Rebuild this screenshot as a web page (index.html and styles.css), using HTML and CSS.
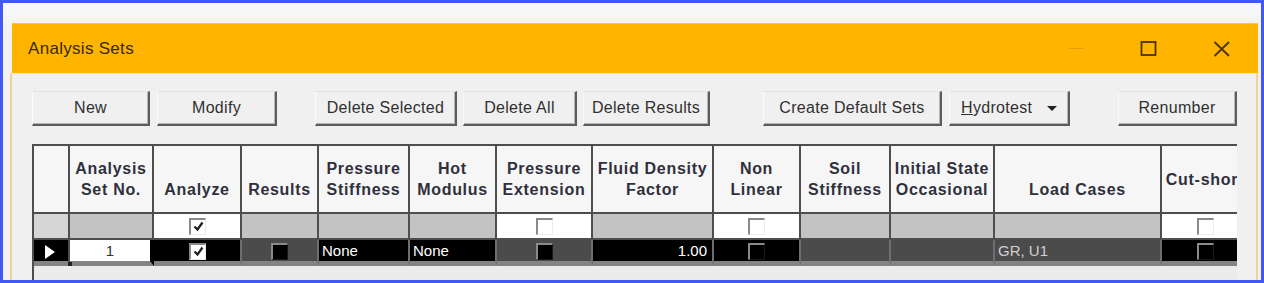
FILE: index.html
```html
<!DOCTYPE html>
<html lang="en">
<head>
    <meta charset="UTF-8">
    <meta name="viewport" content="width=device-width, initial-scale=1.0">
    <title>Analysis Sets</title>
    <link rel="stylesheet" href="styles.css">
</head>
<body>
    <div class="frame">
        <div class="window">
            <!-- Title bar -->
            <div class="titlebar">
                <span class="title">Analysis Sets</span>
                <div class="controls">
                    <span class="ctl"><span class="min-line"></span></span>
                    <span class="ctl">
                        <svg width="18" height="16" viewBox="0 0 18 16"><rect x="1.5" y="1" width="14" height="13" fill="none" stroke="#4a3405" stroke-width="1.8"/></svg>
                    </span>
                    <span class="ctl">
                        <svg width="18" height="16" viewBox="0 0 18 16"><path d="M1.5 1 L16 15 M16 1 L1.5 15" stroke="#4a3405" stroke-width="1.8" fill="none"/></svg>
                    </span>
                </div>
            </div>
            <!-- Body -->
            <div class="winbody">
                <div class="toolbar">
                    <div class="btn-group">
                        <button class="btn w-new">New</button>
                        <button class="btn w-modify">Modify</button>
                    </div>
                    <div class="btn-group g-delete">
                        <button class="btn w-delsel">Delete Selected</button>
                        <button class="btn w-delall">Delete All</button>
                        <button class="btn w-delres">Delete Results</button>
                    </div>
                    <div class="btn-group g-create">
                        <button class="btn w-create">Create Default Sets</button>
                        <button class="btn w-hydro"><u>H</u>ydrotest <span class="caret"></span></button>
                    </div>
                    <div class="btn-group g-renum">
                        <button class="btn w-renum">Renumber</button>
                    </div>
                </div>

                <div class="grid">
                    <table>
                        <colgroup>
                            <col style="width:36px"><col style="width:84px"><col style="width:88px"><col style="width:77px">
                            <col style="width:91px"><col style="width:87px"><col style="width:96px"><col style="width:121px">
                            <col style="width:87px"><col style="width:90px"><col style="width:104px"><col style="width:167px">
                            <col style="width:88px">
                        </colgroup>
                        <tr class="head">
                            <th></th>
                            <th>Analysis<br>Set No.</th>
                            <th class="low">Analyze</th>
                            <th class="low">Results</th>
                            <th>Pressure<br>Stiffness</th>
                            <th>Hot<br>Modulus</th>
                            <th>Pressure<br>Extension</th>
                            <th>Fluid Density<br>Factor</th>
                            <th>Non<br>Linear</th>
                            <th>Soil<br>Stiffness</th>
                            <th>Initial State<br>Occasional</th>
                            <th class="low">Load Cases</th>
                            <th>Cut-short</th>
                        </tr>
                        <tr class="filter">
                            <td class="rh"></td>
                            <td></td>
                            <td class="on"><span class="cb"><svg width="13" height="13" viewBox="0 0 13 13"><path d="M2.5 6.5 L5.5 9.5 L10.5 2.5" stroke="#1e1e1e" stroke-width="2.2" fill="none"/></svg></span></td>
                            <td></td>
                            <td></td>
                            <td></td>
                            <td class="on"><span class="cb"></span></td>
                            <td></td>
                            <td class="on"><span class="cb"></span></td>
                            <td></td>
                            <td></td>
                            <td></td>
                            <td class="on"><span class="cb"></span></td>
                        </tr>
                        <tr class="data">
                            <td class="rh"><span class="arrow"></span><span class="grip"></span></td>
                            <td class="num">1</td>
                            <td class="blk"><span class="cb"><svg width="13" height="13" viewBox="0 0 13 13"><path d="M2.5 6.5 L5.5 9.5 L10.5 2.5" stroke="#1e1e1e" stroke-width="2.2" fill="none"/></svg></span></td>
                            <td class="ro"><span class="cb dark"></span></td>
                            <td class="blk txt">None</td>
                            <td class="blk txt">None</td>
                            <td class="ro"><span class="cb dark"></span></td>
                            <td class="blk val">1.00</td>
                            <td class="blk"><span class="cb dark"></span></td>
                            <td class="ro"></td>
                            <td class="ro"></td>
                            <td class="ro txt">GR, U1</td>
                            <td class="blk"><span class="cb dark"></span></td>
                        </tr>
                    </table>
                </div>
            </div>
        </div>
    </div>
</body>
</html>
```

FILE: styles.css
```css
html, body { margin: 0; padding: 0; }
body { width: 1264px; height: 283px; box-sizing: border-box; padding: 3px; background: #4258f2; overflow: hidden; font-family: "Liberation Sans", Arial, sans-serif; }
.frame { height: 277px; box-sizing: border-box; padding: 20px 3px 0 7px; background: linear-gradient(#f8f8f8, #f1f1f1 30px); overflow: hidden; }
.window { width: 1248px; display: flex; flex-direction: column; }

/* title bar */
.titlebar { flex-shrink: 0; height: 50px; margin-left: 2px; background: #ffb400; border-top: 1px solid #ffc43a; display: flex; align-items: center; justify-content: space-between; box-sizing: border-box; }
.title { padding-left: 16px; font-size: 17px; letter-spacing: 0.3px; color: #38290a; }
.controls { display: flex; height: 100%; }
.ctl { width: 73px; height: 100%; display: flex; align-items: center; justify-content: center; }
.min-line { width: 14px; height: 1px; background: #e69c00; }

/* window body */
.winbody { flex-shrink: 0; background: #f0f0f0; border-left: 2px solid #efd396; border-right: 2px solid #efd396; border-top: 1px solid #ffe3a0; padding: 17px 0 0 20px; }
.toolbar { display: flex; height: 35px; }
.btn-group { display: flex; gap: 7px; }
.g-delete { margin-left: 38px; gap: 6px; }
.g-create { margin-left: 53px; }
.g-renum { margin-left: 48px; }
.btn { height: 35px; padding: 0; background: #f0f0f0; border-top: 1px solid #e2e2e2; border-left: 1px solid #fafafa; border-right: 2px solid #5c5c5c; border-bottom: 2px solid #5c5c5c; box-shadow: inset -1px -1px 0 #b4b4b4; font-family: "Liberation Sans", Arial, sans-serif; font-size: 16px; letter-spacing: 0.3px; color: #303030; }
.btn u { text-decoration-thickness: 1px; }
.caret { display: inline-block; margin-left: 10px; vertical-align: middle; border-left: 5px solid transparent; border-right: 5px solid transparent; border-top: 5px solid #222; }
.w-new { width: 118px; }
.w-modify { width: 120px; }
.w-delsel { width: 142px; }
.w-delall { width: 114px; }
.w-delres { width: 127px; }
.w-create { width: 179px; }
.w-hydro { width: 121px; }
.w-renum { width: 119px; }

/* grid */
.grid { margin-top: 18px; width: 1205px; height: 140px; box-sizing: border-box; border-top: 2px solid #4e4e4e; border-left: 2px solid #4e4e4e; background: #ececec; overflow: hidden; }
.grid table { table-layout: fixed; border-collapse: separate; border-spacing: 0; width: 1216px; }
.grid th, .grid td { padding: 0; border-right: 2px solid #4e4e4e; border-bottom: 2px solid #4e4e4e; overflow: hidden; white-space: nowrap; }
.head th { height: 66px; background: #f6f6f6; font-size: 16px; font-weight: bold; letter-spacing: 0.7px; line-height: 21px; color: #30303c; text-align: center; vertical-align: middle; }
.head th.low { vertical-align: bottom; padding-bottom: 12px; height: 54px; }
.filter td { height: 24px; background: #c3c3c3; text-align: center; vertical-align: middle; }
.filter td.rh { background: #d6d6d6; }
.filter td.on { background: #fff; }
.cb { display: inline-block; width: 14px; height: 14px; vertical-align: middle; background: #fff; border-top: 2px solid #8a8a8a; border-left: 2px solid #8a8a8a; border-right: 1px solid #ebebeb; border-bottom: 1px solid #ebebeb; position: relative; }
.cb svg { position: absolute; left: 1px; top: 0; }
.cb.dark { background: #000; border-right-color: #1a1a1a; border-bottom-color: #1a1a1a; }
.data td { height: 21px; background: #000; border-right: 2px solid #6e6e6e; border-bottom: 5px solid #848484; text-align: center; vertical-align: middle; font-size: 15px; color: #fff; }
.data td.rh { position: relative; overflow: visible; text-align: left; padding-left: 11px; border-right-color: #4e4e4e; }
.arrow { display: inline-block; vertical-align: middle; border-left: 10px solid #fff; border-top: 7px solid transparent; border-bottom: 7px solid transparent; }
.grip { position: absolute; right: -4px; bottom: -5px; width: 4px; height: 4px; background: #222; }
.data td.num { background: #fff; color: #333; border-right: 4px solid #000; }
.data td.ro { background: #4b4b4b; color: #d0d0d0; }
.data td.txt { text-align: left; padding-left: 3px; }
.data td.val { text-align: right; padding-right: 5px; }
```
